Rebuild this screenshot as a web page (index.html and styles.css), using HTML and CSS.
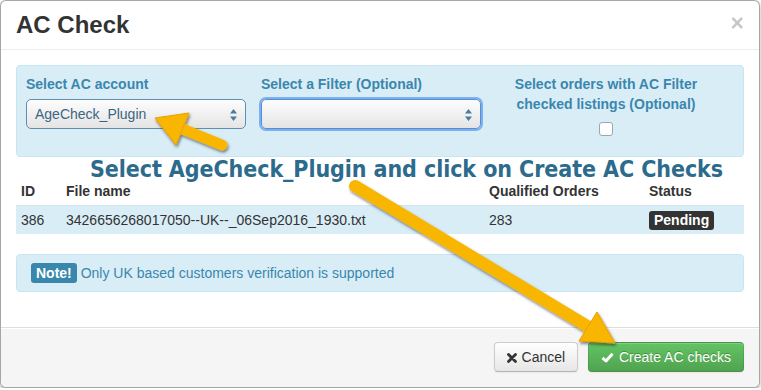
FILE: index.html
```html
<!DOCTYPE html>
<html>
<head>
<title>AC Check</title>
<link rel="stylesheet" href="styles.css">
</head>
<body>

<div class="modal">
  <div class="modal-header">
    <span class="close">&times;</span>
    <h3>AC Check</h3>
  </div>

  <div class="modal-body">
    <div class="well">
      <div class="field">
        <label>Select AC account</label>
        <div class="select">AgeCheck_Plugin
          <svg class="updown" width="7" height="12" viewBox="0 0 7 12"><path d="M3.5 0 L7 4.5 L0 4.5 Z M3.5 12 L7 7.5 L0 7.5 Z"/></svg>
        </div>
      </div>
      <div class="field">
        <label>Select a Filter (Optional)</label>
        <div class="select focused">
          <svg class="updown" width="7" height="12" viewBox="0 0 7 12"><path d="M3.5 0 L7 4.5 L0 4.5 Z M3.5 12 L7 7.5 L0 7.5 Z"/></svg>
        </div>
      </div>
      <div class="field center">
        <label>Select orders with AC Filter checked listings (Optional)</label>
        <span class="checkbox"></span>
      </div>
    </div>

    <table class="table">
      <thead>
        <tr><th class="c-id">ID</th><th class="c-file">File name</th><th class="c-qty">Qualified Orders</th><th>Status</th></tr>
      </thead>
      <tbody>
        <tr class="info">
          <td>386</td><td>3426656268017050--UK--_06Sep2016_1930.txt</td><td>283</td>
          <td><span class="label">Pending</span></td>
        </tr>
      </tbody>
    </table>

    <div class="alert"><span class="label label-info">Note!</span> Only UK based customers verification is supported</div>
  </div>

  <div class="modal-footer">
    <button class="btn">
      <svg class="icon" width="10" height="10" viewBox="0 0 10 10"><path d="M1.5 1.5 L8.5 8.5 M8.5 1.5 L1.5 8.5" stroke="#333" stroke-width="2.8" stroke-linecap="round"/></svg>
      Cancel</button>
    <button class="btn btn-success">
      <svg class="icon" width="13" height="11" viewBox="0 0 13 11"><path d="M1.5 5.8 L5 9 L11.5 1.8" fill="none" stroke="#fff" stroke-width="3" stroke-linejoin="round"/></svg>
      Create AC checks</button>
  </div>
</div>

<div class="hint">Select AgeCheck_Plugin and click on Create AC Checks</div>

<svg class="arrows" width="761" height="390" viewBox="0 0 761 390">
  <defs>
    <filter id="shadow" x="-20%" y="-20%" width="140%" height="140%">
      <feDropShadow dx="1" dy="2" stdDeviation="1.5" flood-color="#000" flood-opacity="0.5"/>
    </filter>
  </defs>
  <g filter="url(#shadow)" fill="#f8b600" stroke="#e9a000" stroke-width="1">
    <line x1="222" y1="145" x2="180" y2="128" stroke="#f8b600" stroke-width="11" stroke-linecap="round"/>
    <polygon points="155,118 189,113 176,145"/>
    <line x1="355" y1="186" x2="592" y2="329" stroke="#f8b600" stroke-width="12" stroke-linecap="round"/>
    <polygon points="615,343 579,341 597,312"/>
  </g>
</svg>

</body>
</html>
```

FILE: styles.css
```css
body{
margin:0;
background:#fff;
font-family:"Liberation Sans", Arial, sans-serif;
font-size:14px;
line-height:20px;
color:#333;
}

.modal{
width:760px;
box-sizing:border-box;
border:1px solid rgba(0,0,0,.35);
border-radius:6px;
box-shadow:0 2px 5px rgba(0,0,0,.3);
background:#fff;
overflow:hidden;
}

.modal-header{
padding:9px 15px;
border-bottom:1px solid #eee;
}

.modal-header h3{
margin:0;
font-size:24px;
line-height:30px;
font-weight:bold;
color:#333;
}

.close{
float:right;
margin-top:3px;
font-size:23px;
line-height:20px;
font-weight:bold;
color:#000;
opacity:.22;
}

.modal-body{
padding:15px;
}

.well{
display:flex;
gap:15px;
padding:8px 9px 17px;
margin-bottom:20px;
background:#d9edf7;
border:1px solid #c8e5f2;
border-radius:4px;
}

.field{
width:220px;
}

.field.center{
text-align:center;
}

.field label{
display:block;
margin-bottom:5px;
font-weight:bold;
color:#3a87ad;
}

.field.center label{
margin-bottom:0;
}

.select{
position:relative;
height:30px;
box-sizing:border-box;
margin-bottom:10px;
padding:4px 8px;
border:1px solid #5f8fb0;
border-radius:5px;
background:linear-gradient(#fdfdfd, #e4e4e4);
color:#3b6683;
}

.select.focused{
border:1px solid #4d90e0;
box-shadow:0 0 0 2px #7fb0ea;
}

.updown{
position:absolute;
right:8px;
top:9px;
fill:#4a7ca3;
}

.checkbox{
display:block;
width:12px;
height:12px;
margin:8px auto 0;
background:#fff;
border:1px solid #9aa7b0;
border-radius:3px;
}

.table{
width:100%;
border-collapse:collapse;
margin-bottom:20px;
}

.table th, .table td{
padding:4px 5px;
text-align:left;
vertical-align:top;
}

.table th{
font-weight:bold;
}

.table td{
border-top:1px solid #d4e6ef;
}

.table tr.info td{
background:#d9edf7;
}

.c-id{ width:35px; }
.c-file{ width:413px; }
.c-qty{ width:150px; }

.label{
display:inline-block;
padding:0 5px;
line-height:19px;
font-weight:bold;
color:#fff;
background:#333;
border-radius:3px;
}

.label-info{
background:#3a87ad;
line-height:20px;
vertical-align:top;
}

.alert{
padding:8px 14px;
margin-bottom:20px;
background:#d9edf7;
border:1px solid #c8e5f2;
border-radius:4px;
color:#3a87ad;
}

.modal-footer{
padding:14px 15px 15px;
text-align:right;
background:#f5f5f5;
border-top:1px solid #ddd;
box-shadow:inset 0 1px 0 #fff;
}

.btn{
height:30px;
padding:4px 12px;
font-family:inherit;
font-size:14px;
line-height:20px;
color:#333;
background:linear-gradient(#fff, #e6e6e6);
border:1px solid #ccc;
border-bottom-color:#b3b3b3;
border-radius:4px;
box-shadow:inset 0 1px 0 rgba(255,255,255,.2), 0 1px 2px rgba(0,0,0,.05);
}

.btn + .btn{
margin-left:6px;
}

.btn-success{
color:#fff;
text-shadow:0 -1px 0 rgba(0,0,0,.25);
background:linear-gradient(#62c462, #51a351);
border-color:rgba(0,0,0,.1) rgba(0,0,0,.1) rgba(0,0,0,.25);
}

.icon{
vertical-align:-1px;
margin-right:1px;
}

.hint{
position:absolute;
left:90px;
top:155px;
font-family:"DejaVu Sans Condensed", "DejaVu Sans", sans-serif;
font-weight:bold;
font-size:23px;
line-height:28px;
letter-spacing:-0.08px;
color:#2c6b8c;
text-shadow:0 0 2px #fff, 0 0 2px #fff;
white-space:nowrap;
}

.arrows{
position:absolute;
left:0;
top:0;
pointer-events:none;
}
```
